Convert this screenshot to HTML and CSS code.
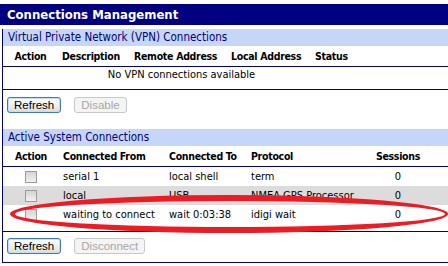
FILE: index.html
```html
<!DOCTYPE html>
<html lang="en">
<head>
    <meta charset="UTF-8">
    <title>Connections Management</title>
    <link rel="stylesheet" href="styles.css">
</head>
<body>
    <div class="page">
        <h1 class="title">Connections Management</h1>
        <div class="panel">
            <div class="section-head">Virtual Private Network (VPN) Connections</div>
            <div class="table-wrap">
                <table class="grid vpn">
                    <colgroup>
                        <col style="width:55px"><col style="width:72px"><col style="width:97px"><col style="width:84px"><col>
                    </colgroup>
                    <tr>
                        <th class="center">Action</th>
                        <th>Description</th>
                        <th>Remote Address</th>
                        <th>Local Address</th>
                        <th>Status</th>
                    </tr>
                    <tr>
                        <td colspan="5" class="empty">No VPN connections available</td>
                    </tr>
                </table>
            </div>
            <div class="actions">
                <button class="btn primary">Refresh</button>
                <button class="btn" disabled>Disable</button>
            </div>

            <div class="section-head">Active System Connections</div>
            <div class="table-wrap">
                <table class="grid active">
                    <colgroup>
                        <col style="width:56px"><col style="width:106px"><col style="width:82px"><col style="width:105px"><col style="width:92px"><col>
                    </colgroup>
                    <tr>
                        <th class="center">Action</th>
                        <th>Connected From</th>
                        <th>Connected To</th>
                        <th>Protocol</th>
                        <th class="center">Sessions</th>
                        <th></th>
                    </tr>
                    <tr>
                        <td class="center"><span class="check"></span></td>
                        <td>serial 1</td>
                        <td>local shell</td>
                        <td>term</td>
                        <td class="center">0</td>
                        <td></td>
                    </tr>
                    <tr class="alt">
                        <td class="center"><span class="check"></span></td>
                        <td>local</td>
                        <td>USB</td>
                        <td>NMEA GPS Processor</td>
                        <td class="center">0</td>
                        <td></td>
                    </tr>
                    <tr>
                        <td class="center"><span class="check"></span></td>
                        <td>waiting to connect</td>
                        <td>wait 0:03:38</td>
                        <td>idigi wait</td>
                        <td class="center">0</td>
                        <td></td>
                    </tr>
                </table>
            </div>
            <div class="actions last">
                <button class="btn primary">Refresh</button>
                <button class="btn" disabled>Disconnect</button>
            </div>
        </div>

        <!-- hand-drawn highlight around the waiting row -->
        <svg class="mark" width="448" height="266" viewBox="0 0 448 266">
            <path fill="#ed1c24" fill-rule="evenodd"
                d="M10 214 A219 19 0 1 0 448 214 A219 19 0 1 0 10 214 Z
                   M15 214 A215 13 0 1 0 445 214 A215 13 0 1 0 15 214 Z"/>
        </svg>
    </div>
</body>
</html>
```

FILE: styles.css
```css
body {
    margin: 0;
    font-family: "DejaVu Sans Condensed", "DejaVu Sans", sans-serif;
    font-size: 11px;
    color: #000;
    background: #fff;
}

.page {
    position: relative;
    width: 448px;
    height: 266px;
    overflow: hidden;
}

.title {
    margin: 4px 0 0 0;
    height: 21px;
    line-height: 21px;
    padding-left: 7px;
    background-color: #000080;
    color: #fff;
    font-size: 13px;
    font-weight: bold;
}

.panel {
    margin-left: 2px;
    border-left: 1px solid #000080;
    border-bottom: 1px solid #000080;
}

.section-head {
    margin-top: 4px;
    height: 17px;
    line-height: 17px;
    padding-left: 5px;
    background-color: #c6d6f8;
    color: #000080;
    font-size: 11.5px;
}

.table-wrap {
    border-bottom: 1px solid #000080;
    padding-bottom: 7px;
}

.grid {
    width: 100%;
    table-layout: fixed;
    border-collapse: collapse;
}

.grid th {
    height: 20px;
    padding: 0 4px;
    text-align: left;
    font-size: 10.5px;
    letter-spacing: -0.3px;
    font-weight: bold;
    vertical-align: middle;
    border-bottom: 1px solid #000080;
    white-space: nowrap;
}

.grid td {
    padding: 0 4px;
    white-space: nowrap;
}

.grid .center {
    text-align: center;
}

.vpn td {
    height: 15px;
    text-align: center;
}

.vpn .empty {
    padding-right: 92px;
}

.active td {
    height: 19px;
}

.active tr.alt td {
    background-color: #dcdcdc;
}

.check {
    display: inline-block;
    width: 10px;
    height: 10px;
    border: 1px solid #9c9c9c;
    background: linear-gradient(#d4d4d4, #f2f2f2);
    vertical-align: middle;
}

.actions {
    padding: 7px 0 12px 4px;
    display: flex;
    gap: 13px;
}

.actions.last {
    padding: 6px 0 8px 4px;
}

.btn {
    height: 16px;
    padding: 0 6px;
    font-family: "Liberation Sans", Arial, sans-serif;
    font-size: 11.5px;
    line-height: 14px;
    color: #000;
    border: 1px solid #3f7ab0;
    border-radius: 3px;
    background: linear-gradient(#ffffff, #e6e6e0 80%, #d8d8d0);
    box-shadow: inset 0 0 0 1px #c4def6;
}

.btn:disabled {
    color: #a8a8a8;
    border-color: #c8c8c8;
    background: #f4f4f4;
    box-shadow: none;
}

.mark {
    position: absolute;
    left: 0;
    top: 0;
    pointer-events: none;
}
```
